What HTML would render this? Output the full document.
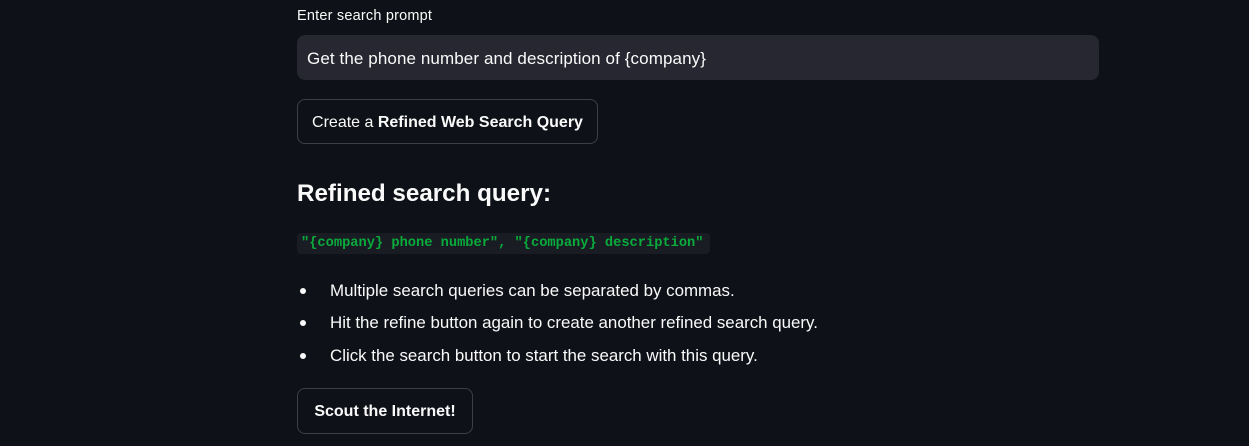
<!DOCTYPE html>
<html><head><style>
body{margin:0;background:#0e1117;width:1249px;height:446px;overflow:hidden;font-family:"Liberation Sans",sans-serif;color:#fafafa;position:relative}
.a{position:absolute;white-space:nowrap}
.lbl{left:297px;top:8px;font-size:14.5px;letter-spacing:0.2px}
.inp{left:297px;top:35px;width:802px;height:45px;background:#262730;border-radius:8px;box-sizing:border-box;padding:0 10px;line-height:47px;font-size:17px;letter-spacing:0.1px}
.btn{border:1px solid rgba(250,250,250,0.2);border-radius:8px;box-sizing:border-box;text-align:center;font-size:16px;background:#0e1117}
h2{position:absolute;margin:0;left:297px;top:177px;font-size:24.2px;font-weight:bold;line-height:34px}
.code{left:297px;top:233px;width:413px;height:21px;background:#1a1c24;border-radius:4px;font-family:"Liberation Mono",monospace;font-size:13.7px;color:#09ab3b;line-height:22px;padding-left:4px;box-sizing:border-box;font-weight:bold}
.li{left:330px;font-size:16.9px;letter-spacing:0px}
.dot{left:300px;width:6px;height:6px;border-radius:50%;background:#fafafa}
</style></head><body>
<div class="a lbl">Enter search prompt</div>
<div class="a inp">Get the phone number and description of {company}</div>
<div class="a btn" style="left:297px;top:99px;width:301px;height:45px;line-height:45px">Create a <b>Refined Web Search Query</b></div>
<h2>Refined search query:</h2>
<div class="a code">"{company} phone number", "{company} description"</div>
<div class="a dot" style="top:288px"></div><div class="a li" style="top:281px">Multiple search queries can be separated by commas.</div>
<div class="a dot" style="top:320px"></div><div class="a li" style="top:313px">Hit the refine button again to create another refined search query.</div>
<div class="a dot" style="top:353px"></div><div class="a li" style="top:346px">Click the search button to start the search with this query.</div>
<div class="a btn" style="left:297px;top:388px;width:176px;height:46px;line-height:46px;font-weight:bold">Scout the Internet!</div>
</body></html>
